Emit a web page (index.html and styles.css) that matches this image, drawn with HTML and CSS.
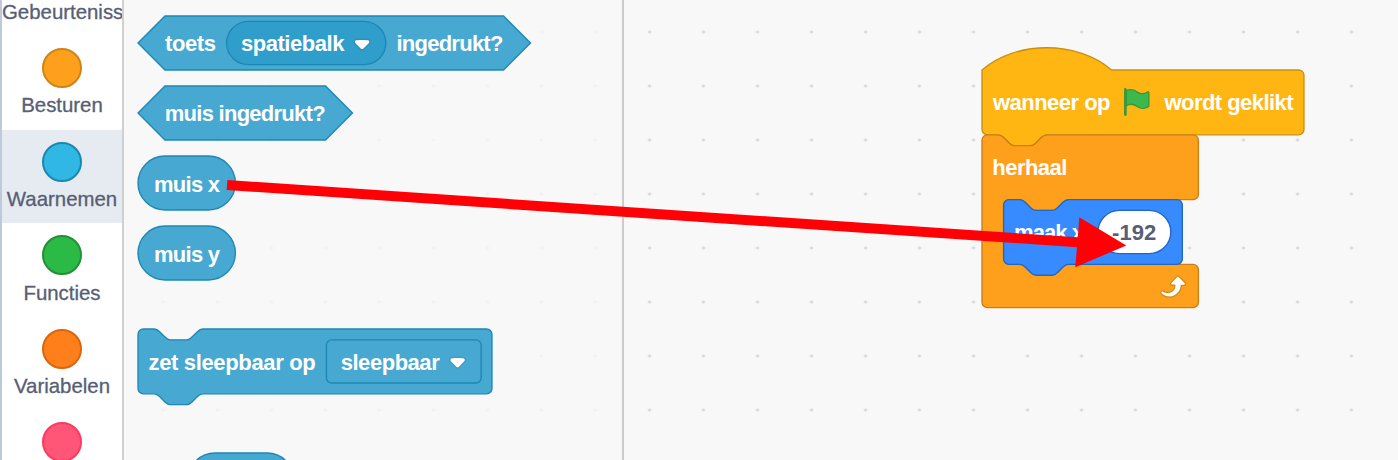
FILE: index.html
```html
<!DOCTYPE html>
<html lang="nl">
<head>
<meta charset="utf-8">
<title>Scratch</title>
<link rel="stylesheet" href="styles.css">
</head>
<body>
<svg class="defs" width="0" height="0">
  <defs>
    <g id="caret">
      <path class="caret-shade" d="M12.71,2.44A2.41,2.41,0,0,1,12,4.16L8.08,8.08a2.45,2.45,0,0,1-3.45,0L.72,4.16A2.42,2.42,0,0,1,0,2.44,2.48,2.48,0,0,1,.71.71C1,.47,1.43,0,6.36,0S11.75.46,12,.71A2.44,2.44,0,0,1,12.71,2.44Z"/>
      <path fill="#fff" d="M6.36,7.79a1.43,1.43,0,0,1-1-.42L1.42,3.45a1.44,1.44,0,0,1,0-2c.56-.56,9.31-.56,9.87,0a1.44,1.44,0,0,1,0,2L7.37,7.37A1.43,1.43,0,0,1,6.36,7.79Z"/>
    </g>
  </defs>
</svg>
<main class="editor">
  <nav class="toolbox">
    <div class="category"><span class="bubble events"></span><span class="label">Gebeurtenissen</span></div>
    <div class="category"><span class="bubble control"></span><span class="label">Besturen</span></div>
    <div class="category selected"><span class="bubble sensing"></span><span class="label">Waarnemen</span></div>
    <div class="category"><span class="bubble operators"></span><span class="label">Functies</span></div>
    <div class="category"><span class="bubble variables"></span><span class="label">Variabelen</span></div>
    <div class="category"><span class="bubble custom"></span></div>
  </nav>
  <section class="flyout">
    <svg class="block" width="393" height="54">
      <path class="sensing-block" d="M27,0H365.5l27,27l-27,27H27L0,27Z"/>
      <rect class="sensing-field" x="88.6" y="5.4" width="159.2" height="43.2" rx="21.6"/>
      <text x="27" y="34.8" textLength="51">toets</text>
      <text x="102.9" y="34.8" textLength="103.5">spatiebalk</text>
      <use href="#caret" transform="translate(215.5 22.5) scale(1.35)"/>
      <text x="258.4" y="34.8" textLength="107">ingedrukt?</text>
    </svg>
    <svg class="block" width="215" height="54">
      <path class="sensing-block" d="M27,0H187.5l27,27l-27,27H27L0,27Z"/>
      <text x="26.8" y="34.8" textLength="160.8">muis ingedrukt?</text>
    </svg>
    <svg class="block" width="98" height="54">
      <rect class="sensing-block" width="97.4" height="54" rx="27"/>
      <text x="16" y="35.5" textLength="66">muis x</text>
    </svg>
    <svg class="block" width="98" height="54">
      <rect class="sensing-block" width="97.4" height="54" rx="27"/>
      <text x="16" y="35.5" textLength="66">muis y</text>
    </svg>
    <svg class="block drag-mode" width="355" height="65">
      <path class="sensing-block" transform="scale(1.35)" d="M0,4A4,4 0 0,1 4,0H12c2,0 3,1 4,2l4,4c1,1 2,2 4,2h12c2,0 3,-1 4,-2l4,-4c1,-1 2,-2 4,-2H258.2a4,4 0 0,1 4,4v40a4,4 0 0,1 -4,4H48c-2,0 -3,1 -4,2l-4,4c-1,1 -2,2 -4,2h-12c-2,0 -3,-1 -4,-2l-4,-4c-1,-1 -2,-2 -4,-2H4a4,4 0 0,1 -4,-4z"/>
      <rect class="sensing-block" x="188.4" y="10.8" width="154.8" height="43.2" rx="5.4"/>
      <text x="10.5" y="40.8" textLength="167.3">zet sleepbaar op</text>
      <text x="202.7" y="40.8" textLength="99">sleepbaar</text>
      <use href="#caret" transform="translate(311 27.7) scale(1.35)"/>
    </svg>
    <svg class="block next-block" width="106" height="54">
      <rect class="sensing-block" width="106" height="54" rx="27"/>
    </svg>
  </section>
  <section class="workspace">
    <svg class="script" width="330" height="270">
      <g transform="scale(1.35)">
        <path class="event-block" d="M0,0c25,-22 71,-22 96,0H234.5a4,4 0 0,1 4,4v40a4,4 0 0,1 -4,4H48c-2,0 -3,1 -4,2l-4,4c-1,1 -2,2 -4,2h-12c-2,0 -3,-1 -4,-2l-4,-4c-1,-1 -2,-2 -4,-2H4a4,4 0 0,1 -4,-4z"/>
        <g transform="translate(102.7 11.9)">
          <path fill="#3bb94e" stroke="#3b9838" stroke-width="1" stroke-linejoin="round" d="M4.2,3.4c2.8,-1.2 5.5,-.8 7.8,.9c2.3,1.7 5.4,1.7 7.9,.1c.5,-.4 1,-.1 1,.5v9.6c0,.4 -.1,.6 -.4,.8c-2.6,1.7 -6.2,1.6 -8.7,-.3c-2.2,-1.7 -5,-2 -7.6,-.4z"/>
          <rect fill="#3b9838" x="2.5" y="1.5" width="2" height="20.6" rx="1"/>
        </g>
        <g transform="translate(0 48)">
          <path class="control-block" d="M0,4A4,4 0 0,1 4,0H12c2,0 3,1 4,2l4,4c1,1 2,2 4,2h12c2,0 3,-1 4,-2l4,-4c1,-1 2,-2 4,-2H156.3a4,4 0 0,1 4,4v40a4,4 0 0,1 -4,4H64c-2,0 -3,1 -4,2l-4,4c-1,1 -2,2 -4,2h-12c-2,0 -3,-1 -4,-2l-4,-4c-1,-1 -2,-2 -4,-2h-8a4,4 0 0,0 -4,4v40a4,4 0 0,0 4,4H156.3a4,4 0 0,1 4,4v24a4,4 0 0,1 -4,4H4a4,4 0 0,1 -4,-4z"/>
          <g transform="translate(128 100)">
            <path fill="#cf8b17" d="M23.3,11c-0.3,0.6-0.9,1-1.5,1h-1.6c-0.1,1.3-0.5,2.5-1.1,3.6c-0.9,1.7-2.3,3.2-4.1,4.1c-1.7,0.9-3.6,1.2-5.5,0.9c-1.8-0.3-3.5-1.1-4.9-2.3c-0.7-0.7-0.7-1.9,0-2.6c0.6-0.6,1.6-0.7,2.3-0.2H7c0.9,0.6,1.9,0.9,2.9,0.9s1.9-0.3,2.7-0.9c1.1-0.8,1.8-2.1,1.8-3.5h-1.5c-0.9,0-1.7-0.7-1.7-1.7c0-0.4,0.2-0.9,0.5-1.2l4.4-4.4c0.7-0.6,1.7-0.6,2.4,0L23,9.2C23.5,9.7,23.6,10.4,23.3,11z"/>
            <path fill="#fff" d="M21.8,11h-2.6c0,1.5-0.3,2.9-1,4.2c-0.8,1.6-2.1,2.8-3.7,3.6c-1.5,0.8-3.3,1.1-4.9,0.8c-1.6-0.2-3.2-1-4.4-2.1c-0.4-0.3-0.4-0.9-0.1-1.2c0.3-0.4,0.9-0.4,1.2-0.1c1,0.7,2.2,1.1,3.4,1.1s2.3-0.3,3.3-1c0.9-0.6,1.6-1.5,2-2.6c0.3-0.9,0.4-1.8,0.2-2.8h-2.4c-0.4,0-0.7-0.3-0.7-0.7c0-0.2,0.1-0.3,0.2-0.4l4.4-4.4c0.3-0.3,0.7-0.3,0.9,0L22,9.8c0.3,0.3,0.4,0.6,0.3,0.9S22,11,21.8,11z"/>
          </g>
          <path class="motion-block" transform="translate(16 48)" d="M0,4A4,4 0 0,1 4,0H12c2,0 3,1 4,2l4,4c1,1 2,2 4,2h12c2,0 3,-1 4,-2l4,-4c1,-1 2,-2 4,-2H128.4a4,4 0 0,1 4,4v40a4,4 0 0,1 -4,4H48c-2,0 -3,1 -4,2l-4,4c-1,1 -2,2 -4,2h-12c-2,0 -3,-1 -4,-2l-4,-4c-1,-1 -2,-2 -4,-2H4a4,4 0 0,1 -4,-4z"/>
        </g>
      </g>
      <text x="11" y="40" textLength="117.5">wanneer op</text>
      <text x="182.5" y="40" textLength="129">wordt geklikt</text>
      <text x="10.3" y="104.8" textLength="75">herhaal</text>
      <text x="32" y="169.7" textLength="70">maak x</text>
      <rect class="number" x="115.9" y="140.4" width="72.9" height="43.2" rx="21.6"/>
      <text class="value" x="130" y="169.7" textLength="44.3">-192</text>
    </svg>
  </section>
  <svg class="pointer" width="1398" height="460">
    <path d="M227.4,180L1077.8,237.3L1079.3,217.3L1126.3,245.4L1075.2,267.3L1077,247.2L226.6,190Z"/>
  </svg>
</main>
</body>
</html>
```
FILE: styles.css
```css
body {
  margin: 0;
  overflow: hidden;
  font-family: "Liberation Sans", Arial, sans-serif;
}

.defs {
  position: absolute;
}

.editor {
  position: relative;
  display: flex;
  width: 1398px;
  height: 460px;
  overflow: hidden;
  background-color: #f8f8f8;
  background-image: radial-gradient(circle at 27px 27px, #d6d6d6 1px, rgba(214, 214, 214, 0) 2px);
  background-size: 54px 54px;
  background-position: 28.5px 5px;
}

.toolbox {
  box-sizing: border-box;
  flex: none;
  width: 124px;
  height: 460px;
  overflow: hidden;
  background: #fff;
  border-left: 2px solid #bfc9dc;
  border-right: 2px solid #d0d0d0;
}

.toolbox .category:first-child {
  margin-top: -57.3px;
}

.category {
  box-sizing: border-box;
  display: flex;
  flex-direction: column;
  align-items: center;
  height: 93.6px;
  padding-top: 11.7px;
}

.category.selected {
  background: #e6ebf2;
}

.bubble {
  box-sizing: border-box;
  flex: none;
  width: 40px;
  height: 40px;
  border: 2px solid;
  border-radius: 50%;
}

.events { background: #ffbf00; border-color: #cc9900; }
.control { background: #ffa01c; border-color: #cf8419; }
.sensing { background: #30b7e3; border-color: #1b87b3; }
.operators { background: #2bba45; border-color: #248f37; }
.variables { background: #ff7f1b; border-color: #db650f; }
.custom { background: #ff5576; border-color: #ff3860; }

.label {
  align-self: flex-start;
  min-width: 100%;
  margin-top: 5.5px;
  font-size: 20.4px;
  line-height: 24px;
  text-align: center;
  white-space: nowrap;
  color: #575e75;
  -webkit-text-stroke: 0.3px #575e75;
}

.flyout {
  box-sizing: border-box;
  display: flex;
  flex: none;
  flex-direction: column;
  align-items: flex-start;
  gap: 16.2px;
  width: 500px;
  height: 460px;
  padding: 15.9px 0 0 14.2px;
  overflow: hidden;
  background: rgba(248, 248, 248, 0.8);
  border-right: 2px solid #ccc;
}

.block,
.script {
  display: block;
  flex: none;
  overflow: visible;
}

.drag-mode {
  margin-top: 32.6px;
}

.next-block {
  margin: 42.8px 0 0 50px;
}

.workspace {
  flex: 1;
  padding: 70px 0 0 358.3px;
}

text {
  font-size: 22px;
  font-weight: 700;
  fill: #fff;
}

.value {
  fill: #575e75;
}

.sensing-block {
  fill: #47a8d1;
  stroke: #1d88b4;
  stroke-width: 1.35px;
}

path.sensing-block[transform] {
  stroke-width: 1px;
}

.sensing-field {
  fill: #2f9ecb;
  stroke: #1d88b4;
  stroke-width: 1.35px;
}

.caret-shade {
  fill: #231f20;
  opacity: 0.1;
}

.event-block { fill: #ffb612; stroke: #c9900f; }
.control-block { fill: #ffa01c; stroke: #c97f15; }
.motion-block { fill: #388aff; stroke: #2266c4; }

.number {
  fill: #fff;
  stroke: #2266c4;
  stroke-width: 1.35px;
}

.pointer {
  position: absolute;
  top: 0;
  left: 0;
  fill: #ff0006;
}
```
